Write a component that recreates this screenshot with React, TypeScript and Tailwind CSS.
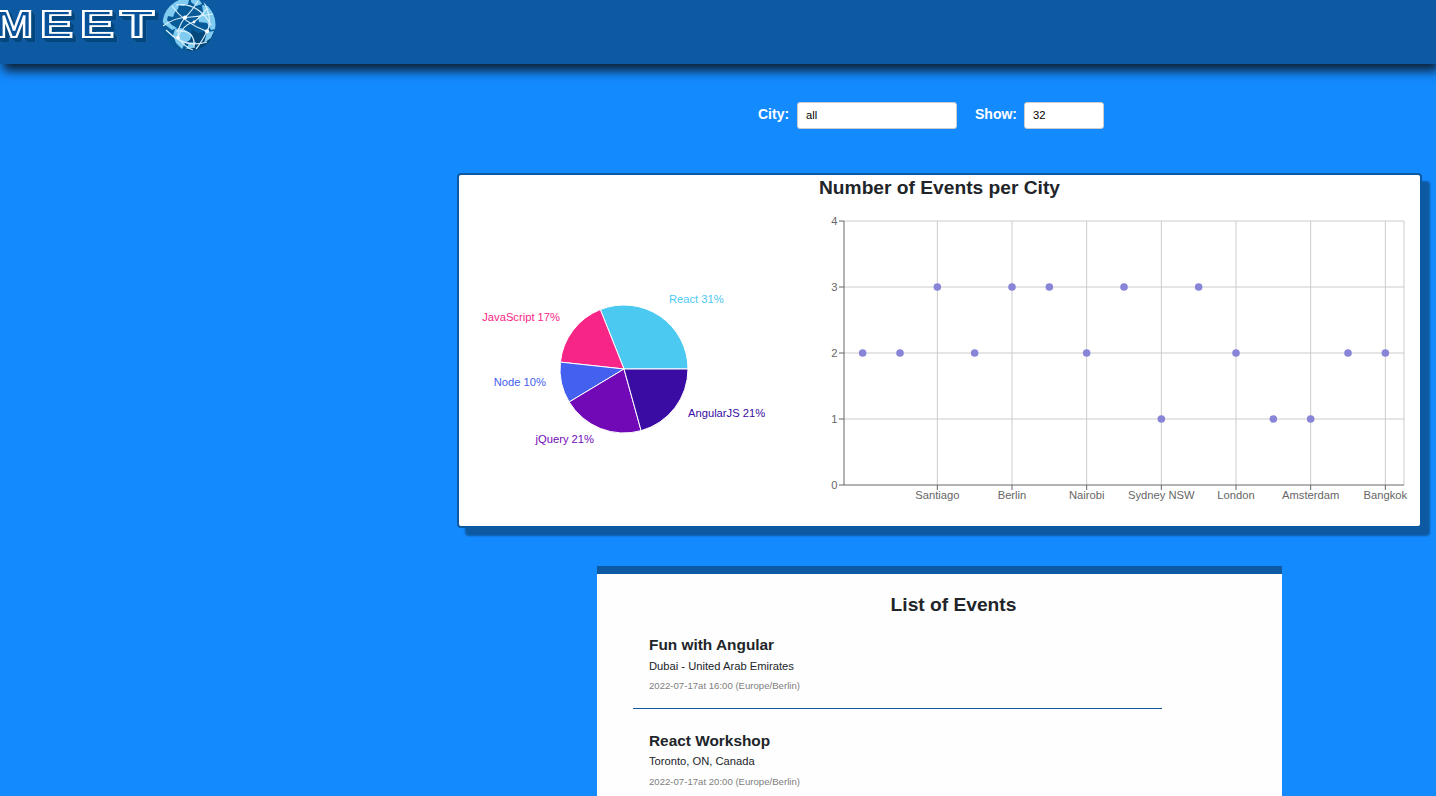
const slices = [
  { name: "React", pct: 31, count: 9, color: "#4cc9f0", x: 210, y: 104, anchor: "start" },
  { name: "JavaScript", pct: 17, count: 5, color: "#f72585", x: 101, y: 122, anchor: "end" },
  { name: "Node", pct: 10, count: 3, color: "#4361ee", x: 87, y: 187, anchor: "end" },
  { name: "jQuery", pct: 21, count: 6, color: "#7209b7", x: 135, y: 244, anchor: "end" },
  { name: "AngularJS", pct: 21, count: 6, color: "#3a0ca3", x: 229, y: 218, anchor: "start" },
] as const;

const cityCounts = [2, 2, 3, 2, 3, 3, 2, 3, 1, 3, 2, 1, 1, 2, 2];
const cityTicks = ["Santiago", "Berlin", "Nairobi", "Sydney NSW", "London", "Amsterdam", "Bangkok"];

const events = [
  { title: "Fun with Angular", place: "Dubai - United Arab Emirates", time: "2022-07-17at 16:00 (Europe/Berlin)" },
  { title: "React Workshop", place: "Toronto, ON, Canada", time: "2022-07-17at 20:00 (Europe/Berlin)" },
];

const letters = [
  { c: "M", x: -5, w: 38 },
  { c: "E", x: 40, w: 33 },
  { c: "E", x: 80, w: 34 },
  { c: "T", x: 120, w: 34 },
];

function Logo() {
  return (
    <svg width="220" height="56" viewBox="0 0 220 56" className="block">
      <g
        fontFamily="Liberation Sans, Arial, sans-serif"
        fontWeight="700"
        fontSize="36"
        fill="#07529a"
        stroke="#ffffff"
        strokeWidth="1.9"
        className="[filter:drop-shadow(1px_1px_0_#04477f)_drop-shadow(1px_1px_0_#04477f)_drop-shadow(2px_2px_0_#04477f)_drop-shadow(0.5px_0.5px_0_#5b97c9)]"
      >
        {letters.map((l) => (
          <text key={l.x} x={l.x} y={36.5} textLength={l.w} lengthAdjust="spacingAndGlyphs">
            {l.c}
          </text>
        ))}
      </g>
      <clipPath id="globe">
        <circle cx="189" cy="24.5" r="26.5" />
      </clipPath>
      <g clipPath="url(#globe)">
        <rect x="162" y="-3" width="54" height="55" fill="#075a98" />
        <path d="M192 30 198 33 212 31 216 38 195 52 186 50Z" fill="#044779" />
        <path d="M161 20 166 8 174 0 183-2 189 0 188 4 183 6 179 5 178 9 175 12 173 17 168 16 167 20 172 25 177 28 172 30 164 24Z" fill="#80cbf0" />
        <path d="M175 29 181 28 187 31 192 35 190 40 185 43 182 49 176 43 173 35Z" fill="#80cbf0" />
        <path d="M202 5 208 6 213 13 216 20 216 29 211 30 207 23 199 22 198 17 203 12Z" fill="#80cbf0" />
        <path d="M191-2 199-1 202 4 196 6 191 2ZM207 32 214 31 211 38 204 43ZM189 43 196 42 193 48 186 49Z" fill="#80cbf0" />
        <g fill="none" stroke="#d9f0fc" strokeWidth="1.2">
          <path d="M176 5Q198 2 211 25" />
          <path d="M163 26Q174 18 185 17.5T213 14" />
          <path d="M172 6Q184 23 207 31.5" />
          <path d="M185 17.5Q177 28 178 37Q184 47 193 50" />
          <path d="M178 37Q183 25 194 22Q203 15 207 8" />
          <path d="M176 31Q196 29 194 48" />
          <path d="M204 2Q213 20 207 31.5T196 49" />
          <path d="M166 30Q184 49 207 42" />
          <path d="M185 17.5Q192 11 198 1" />
        </g>
        <g fill="#ffffff">
          <circle cx="185" cy="17.5" r="2.1" />
          <circle cx="207" cy="31.3" r="2.1" />
          <circle cx="178" cy="37.5" r="1.7" />
          <circle cx="194" cy="22" r="1.4" />
        </g>
      </g>
    </svg>
  );
}

function GenrePie() {
  const cx = 165;
  const cy = 170;
  const r = 64;
  const total = slices.reduce((sum, s) => sum + s.count, 0);
  let start = 0;
  return (
    <svg width="341" height="327" className="block shrink-0">
      {slices.map((s) => {
        const end = start + (s.count / total) * Math.PI * 2;
        const d = `M${cx} ${cy}L${cx + r * Math.cos(start)} ${cy - r * Math.sin(start)}A${r} ${r} 0 0 0 ${cx + r * Math.cos(end)} ${cy - r * Math.sin(end)}Z`;
        start = end;
        return <path key={s.name} d={d} fill={s.color} stroke="#fff" strokeWidth="1" />;
      })}
      {slices.map((s) => (
        <text key={s.name} x={s.x} y={s.y} fill={s.color} textAnchor={s.anchor} className="text-[11.2px]">
          {`${s.name} ${s.pct}%`}
        </text>
      ))}
    </svg>
  );
}

function CityScatter() {
  const left = 44;
  const right = 604;
  const bottom = 286;
  const band = (right - left) / cityCounts.length;
  const px = (i: number) => left + band * (i + 0.5);
  const py = (v: number) => bottom - v * 66;
  return (
    <svg width="620" height="327" className="block shrink-0">
      <g stroke="#ccc" strokeWidth="1">
        {[1, 2, 3, 4].map((v) => (
          <line key={v} x1={left} x2={right} y1={py(v)} y2={py(v)} />
        ))}
        {cityTicks.map((t, i) => (
          <line key={t} x1={px(i * 2 + 2)} x2={px(i * 2 + 2)} y1={py(4)} y2={bottom} />
        ))}
        <line x1={right} x2={right} y1={py(4)} y2={bottom} />
      </g>
      <g stroke="#666" strokeWidth="1">
        <line x1={left} x2={right} y1={bottom} y2={bottom} />
        <line x1={left} x2={left} y1={py(4)} y2={bottom} />
        {[0, 1, 2, 3, 4].map((v) => (
          <line key={v} x1={left - 5} x2={left} y1={py(v)} y2={py(v)} />
        ))}
        {cityTicks.map((t, i) => (
          <line key={t} x1={px(i * 2 + 2)} x2={px(i * 2 + 2)} y1={bottom} y2={bottom + 5} />
        ))}
      </g>
      <g fill="#666" className="text-[11.2px]">
        {[0, 1, 2, 3, 4].map((v) => (
          <text key={v} x={left - 6.5} y={py(v) + 4} textAnchor="end">
            {v}
          </text>
        ))}
        {cityTicks.map((t, i) => (
          <text key={t} x={px(i * 2 + 2)} y={bottom + 14} textAnchor="middle">
            {t}
          </text>
        ))}
      </g>
      {cityCounts.map((v, i) => (
        <circle key={i} cx={px(i)} cy={py(v)} r="3.8" fill="#8884d8" />
      ))}
    </svg>
  );
}

export default function App() {
  return (
    <div className="flex h-[796px] w-[1436px] flex-col overflow-hidden bg-[#148aff] font-['Liberation_Sans',Arial,sans-serif] text-[#212529]">
      <header className="h-16 shrink-0 bg-[#0d5aa3] shadow-[3px_7px_10px_#0d2238]">
        <Logo />
      </header>

      <div className="ml-[758px] mt-[38px] flex h-[27px] shrink-0 items-center text-sm font-bold text-white">
        <label htmlFor="city" className="w-[39px] pb-1">City:</label>
        <input id="city" defaultValue="all" className="h-[27px] w-40 rounded-[3px] border border-[#ccc] bg-white px-2 pb-[2px] text-[11.2px] font-normal text-black outline-none" />
        <label htmlFor="show" className="ml-[18px] w-[49px] pb-1">Show:</label>
        <input id="show" defaultValue="32" className="h-[27px] w-20 rounded-[3px] border border-[#ccc] bg-white px-2 pb-[2px] text-[11.2px] font-normal text-black outline-none" />
      </div>

      <section className="ml-[457px] mt-11 h-[355px] w-[965px] shrink-0 rounded border-2 border-[#0d5aa3] bg-white shadow-[8px_8px_2px_#0d5aa3]">
        <h2 className="h-6 text-center text-[19.2px] font-bold leading-[26px]">Number of Events per City</h2>
        <div className="flex">
          <GenrePie />
          <CityScatter />
        </div>
      </section>

      <section className="ml-[597px] mt-[38px] w-[685px] shrink-0 border-t-8 border-[#0d5aa3] bg-[#fefefe] pt-[18px]">
        <h2 className="h-6 pl-7 text-center text-[19.2px] font-bold leading-[26px]">List of Events</h2>
        <ul className="ml-9 mt-[5px] w-[529px]">
          {events.map((e) => (
            <li key={e.title} className="h-24 border-b border-[#0d5aa3] px-4 pt-[14px] [&:first-child]:h-[88px] [&:last-child]:pt-[22px]">
              <h3 className="text-[15.4px] font-bold leading-5">{e.title}</h3>
              <p className="mt-[3px] text-[11.2px] leading-4 [li:last-child>&]:mt-[2px]">{e.place}</p>
              <p className="mt-1 text-[9.6px] leading-4 text-[#808080] [li:last-child>&]:mt-[5px]">{e.time}</p>
            </li>
          ))}
        </ul>
      </section>
    </div>
  );
}
